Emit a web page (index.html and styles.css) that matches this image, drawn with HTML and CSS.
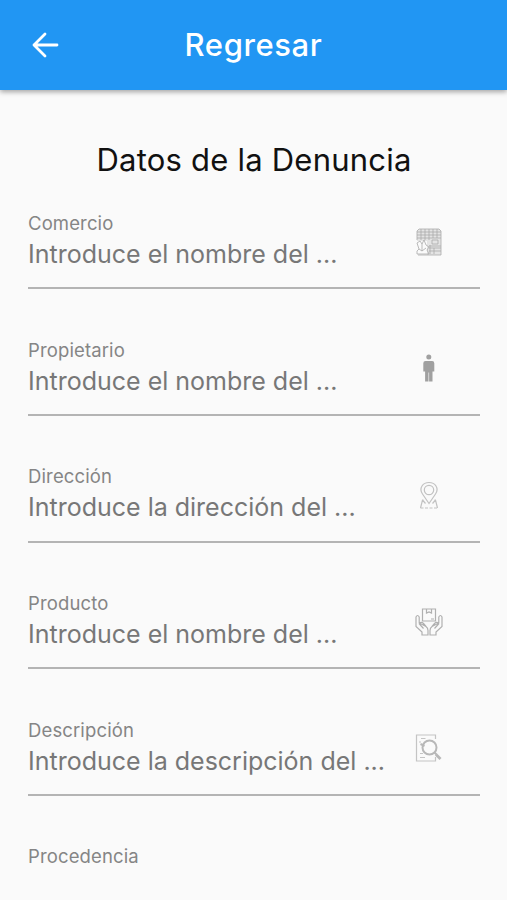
FILE: index.html
```html
<!DOCTYPE html>
<html lang="es">
<head>
    <meta charset="UTF-8">
    <meta name="viewport" content="width=device-width, initial-scale=1.0">
    <title>Datos de la Denuncia</title>
    <link rel="stylesheet" href="styles.css">
</head>
<body>
    <header class="app-bar">
        <button type="button" class="back" aria-label="Regresar">
            <svg width="28" height="28" viewBox="0 0 28 28"><path d="M26 14H3M14 3 3 14l11 11"/></svg>
        </button>
        <div class="app-title">Regresar</div>
    </header>

    <form class="form">
        <h1>Datos de la Denuncia</h1>

        <div class="field">
            <div class="field-text">
                <label for="comercio">Comercio</label>
                <input type="text" id="comercio" placeholder="Introduce el nombre del ...">
            </div>
            <!-- store -->
            <svg class="icon store" viewBox="0 0 28 28">
                <path class="wall" d="M2 3l2-2h20l2 2v24H12V13H2z"/>
                <path d="M2 12V3l2-2h20l2 2v24H3M2 4h24M2 7h24M2 10h24M6 1v11M10 1v11M14 1v11M18 1v9M22 1v9"/>
                <path d="M17 12h6v4h-6zM14 18h12M14 20h12M14 23h12M15 17v9M19 20v6"/>
                <path d="M2 15l3-2 2 3 2-4 2 5 3 2-2 3 2 4H2v-3l2-2zM7 16v7M4 21l3 2 4-3"/>
            </svg>
        </div>

        <div class="field">
            <div class="field-text">
                <label for="propietario">Propietario</label>
                <input type="text" id="propietario" placeholder="Introduce el nombre del ...">
            </div>
            <!-- person -->
            <svg class="icon person" viewBox="0 0 28 28">
                <circle cx="13.800" cy="3" r="2.500"/>
                <path d="M10.500 7h6.600a2.200 2.200 0 0 1 2.200 2.200V17.500h-1.800V27.500h-3.400v-9h-.6v9h-3.400V17.500H8.300V9.200A2.200 2.200 0 0 1 10.500 7z"/>
            </svg>
        </div>

        <div class="field">
            <div class="field-text">
                <label for="direccion">Dirección</label>
                <input type="text" id="direccion" placeholder="Introduce la dirección del ...">
            </div>
            <!-- map pin -->
            <svg class="icon pin" viewBox="0 0 28 28">
                <path d="M14 22.500 7.500 13C3.500 7 8 1.500 14 1.500S24.500 7 20.500 13z"/>
                <circle cx="14" cy="9" r="4.700"/>
                <path d="M8.500 19H7.500L5.500 27M19.500 19h1L22.500 27M7.500 19l3 3.500M20.500 19l-3 3.500"/>
                <path stroke-dasharray="3 1.500" d="M5.500 27h17"/>
            </svg>
        </div>

        <div class="field">
            <div class="field-text">
                <label for="producto">Producto</label>
                <input type="text" id="producto" placeholder="Introduce el nombre del ...">
            </div>
            <!-- box held by two hands -->
            <svg class="icon hands" viewBox="0 0 28 28">
                <path d="M7.500 1h13v12h-13zM11.500 1v4l2.500-1 2.500 1V1M16 11h3"/>
                <path d="M7 27v-3L1 18.500V9q1.500-3 3.200 0v6l6.800 3.500q2 1.500 2 4V27zM4.500 15q2-1.500 4 .5l2.500 3M4 15.500l4.500 5"/>
                <path d="M21 27v-3L27 18.500V9q-1.500-3-3.200 0v6L17 18.500q-2 1.500-2 4V27zM23.500 15q-2-1.500-4 .5l-2.500 3M24 15.500l-4.500 5"/>
            </svg>
        </div>

        <div class="field">
            <div class="field-text">
                <label for="descripcion">Descripción</label>
                <input type="text" id="descripcion" placeholder="Introduce la descripción del ...">
            </div>
            <!-- document and magnifier -->
            <svg class="icon search" viewBox="0 0 28 28">
                <path d="M20.500 5V1h-19v26h19V23M6 4.500h4.500M4 8H6M5 19.500h3M5 23.500h5"/>
                <circle class="lens" cx="14.500" cy="13.500" r="7"/>
                <path class="lens" d="M19.500 18.500l2 2M5.500 10l4 2"/>
                <path class="handle" d="M21 20.500l4.500 4.500"/>
            </svg>
        </div>

        <div class="field last">
            <label>Procedencia</label>
        </div>
    </form>
</body>
</html>
```

FILE: styles.css
```css
* {
    box-sizing: border-box;
}

body {
    margin: 0;
    background-color: #fafafa;
    font-family: Inter, sans-serif;
}

.app-bar {
    display: grid;
    grid-template-columns: 60px 1fr 60px;
    align-items: center;
    height: 89.5px;
    background-color: #2196f3;
    color: #fff;
    box-shadow: 0 2px 5px rgba(0, 0, 0, 0.35);
}

.back {
    display: flex;
    padding: 0 0 0 31px;
    border: none;
    background: none;
}

.back svg {
    flex-shrink: 0;
    fill: none;
    stroke: #fff;
    stroke-width: 2.8;
    stroke-linecap: round;
    stroke-linejoin: round;
}

.app-title {
    text-align: center;
    font-size: 31px;
    font-weight: 500;
    letter-spacing: 0.6px;
}

.form {
    padding: 50.5px 27px 0 28px;
}

h1 {
    margin: 0 0 32px;
    text-align: center;
    font-size: 31px;
    font-weight: 400;
    line-height: 40px;
    letter-spacing: 0.22px;
    color: #111;
}

.field {
    display: flex;
    height: 77.4px;
    margin-bottom: 49.3px;
    padding-right: 37px;
    border-bottom: 2px solid #b4b4b4;
}

.field.last {
    height: auto;
    margin-bottom: 0;
    border-bottom: none;
}

.field-text {
    display: flex;
    flex-direction: column;
    flex: 1;
}

label {
    font-size: 18.5px;
    line-height: 22px;
    letter-spacing: 0.13px;
    color: #858585;
}

input {
    width: 100%;
    height: 40px;
    padding: 0;
    border: none;
    outline: none;
    background: none;
    font-family: inherit;
    font-size: 25px;
    letter-spacing: 0;
}

input::placeholder {
    color: #777;
    opacity: 1;
}

.icon {
    width: 28px;
    height: 28px;
    margin-top: 15.5px;
    fill: none;
    stroke: #b4b4b4;
    stroke-width: 1.2;
}

.store {
    stroke: #aaa;
    stroke-width: 0.8;
}

.wall {
    fill: #e4e4e4;
    stroke: none;
}

.person {
    fill: #a0a0a0;
    stroke: none;
}

.pin {
    stroke: #c2c2c2;
}

.hands {
    stroke: #b0b0b0;
}

.search {
    stroke: #c4c4c4;
}

.lens {
    stroke: #b8b8b8;
    stroke-width: 2;
}

.handle {
    stroke: #b8b8b8;
    stroke-width: 2.8;
}
```
